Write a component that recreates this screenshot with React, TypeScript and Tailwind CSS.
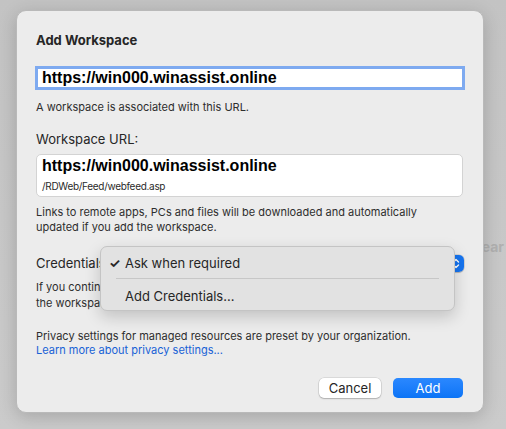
import React from "react";

const font = { fontFamily: "Inter, 'Liberation Sans', sans-serif" };

function UpDown() {
  return (
    <svg width="8" height="11" viewBox="0 0 8 11" fill="none">
      <path d="M1.5 4 L4 1.5 L6.5 4" stroke="white" strokeWidth="1.4" strokeLinecap="round" strokeLinejoin="round" />
      <path d="M1.5 7 L4 9.5 L6.5 7" stroke="white" strokeWidth="1.4" strokeLinecap="round" strokeLinejoin="round" />
    </svg>
  );
}

export default function App() {
  return (
    <div
      className="relative h-[429px] w-[506px] overflow-hidden bg-gradient-to-b from-[#c3c3c3] to-[#cbcbcb] pl-[16px] pt-[10px] text-[#262626]"
      style={font}
    >
      {/* background window text, mostly hidden by the sheet */}
      <span className="absolute right-[2px] top-[236px] text-[14px] font-bold text-[#b0b0b0]">
        Clear
      </span>

      <div className="relative z-10 flex h-[403px] w-[468px] flex-col rounded-[10px] border border-[#b9b9b9] bg-[#ececec] px-[19px] pt-[21px] shadow-[0_4px_18px_rgba(0,0,0,0.18)]">
        <h1 className="text-[13px] font-bold leading-[16px]">Add Workspace</h1>

        <div className="ml-[2px] mt-[21px] flex h-[18px] w-[424px] items-center bg-white pl-[4px] ring-[3px] ring-[#7eaaf0]">
          <span className="text-[16px] font-bold leading-[18px] text-black" style={{ fontFamily: "'Liberation Sans', Arial, sans-serif" }}>
            https://win000.winassist.online
          </span>
        </div>

        <p className="mt-[13px] text-[11px] leading-[14px] text-[#2e2e2e]">
          A workspace is associated with this URL.
        </p>

        <p className="mt-[17px] text-[13px] leading-[16px]">Workspace URL:</p>

        <div className="mt-[7px] flex h-[43px] w-[427px] flex-col rounded-[5px] border border-[#d3d3d3] bg-white pl-[5px] pt-[2px]">
          <span className="text-[16px] font-bold leading-[18px] text-black" style={{ fontFamily: "'Liberation Sans', Arial, sans-serif" }}>
            https://win000.winassist.online
          </span>
          <span className="mt-[5px] text-[10px] leading-[12px] tracking-[-0.3px] text-[#2a2a2a]">
            /RDWeb/Feed/webfeed.asp
          </span>
        </div>

        <p className="mt-[8px] text-[11px] leading-[15px] text-[#2e2e2e]">
          Links to remote apps, PCs and files will be downloaded and automatically
          <br />
          updated if you add the workspace.
        </p>

        <div className="mt-[19px] flex h-[18px] w-[428px] items-center justify-between">
          <span className="text-[13px] leading-[16px]">Credentials</span>
          <div className="flex h-[17px] w-[200px] items-center justify-end rounded-[5px] bg-white shadow-[0_0_0_0.5px_rgba(0,0,0,0.2),0_1px_1px_rgba(0,0,0,0.15)]">
            <div className="flex h-[17px] w-[16px] items-center justify-center rounded-[5px] bg-[#1674f0]">
              <UpDown />
            </div>
          </div>
        </div>

        <p className="mt-[7px] text-[11px] leading-[16px] text-[#2e2e2e]">
          If you continue without adding credentials, you will be prompted when you
          <br />
          the workspace.
        </p>

        <p className="mt-[18px] text-[11px] leading-[14px] text-[#2e2e2e]">
          Privacy settings for managed resources are preset by your organization.
        </p>
        <a className="text-[11px] leading-[14px] text-[#1862d6]">Learn more about privacy settings...</a>

        <div className="mt-[21px] flex justify-end gap-[12px] pr-[1px]">
          <button className="h-[20px] w-[62px] rounded-[5px] bg-white text-[13px] leading-[20px] text-[#262626] shadow-[0_0_0_0.5px_rgba(0,0,0,0.15),0_1px_1.5px_rgba(0,0,0,0.2)]">
            Cancel
          </button>
          <button className="h-[20px] w-[70px] rounded-[5px] bg-gradient-to-b from-[#2a88ff] to-[#0a74f6] text-[13px] leading-[20px] text-white">
            Add
          </button>
        </div>

        {/* popup menu */}
        <div className="absolute left-[83px] top-[235px] flex h-[65px] w-[355px] flex-col rounded-[7px] border border-[#c4c4c4] bg-[#e2e2e2] px-[14px] pt-[7px] shadow-[0_6px_16px_rgba(0,0,0,0.18)]">
          <div className="flex h-[18px] items-center text-[13px] leading-[16px]">
            <span className="-ml-[6px] w-[16px] font-bold">✓</span>
            <span>Ask when required</span>
          </div>
          <div className="mx-[1px] mt-[6px] h-px bg-[#c7c7c7]" />
          <div className="mt-[8px] flex h-[18px] items-center pl-[10px] text-[13px] leading-[16px]">
            Add Credentials...
          </div>
        </div>
      </div>
    </div>
  );
}
